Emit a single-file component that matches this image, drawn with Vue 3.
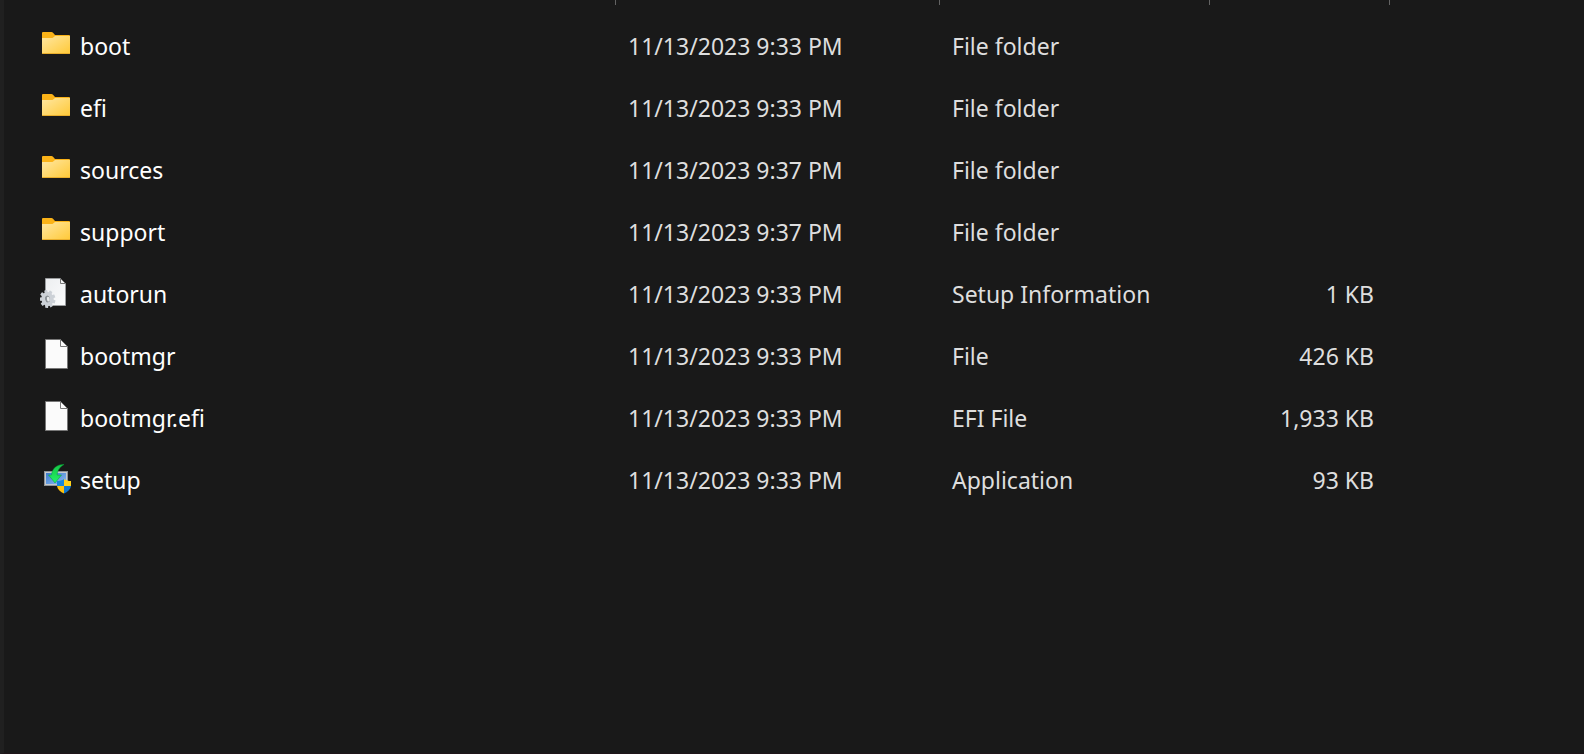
<script setup>
const columns = ['Name', 'Date modified', 'Type', 'Size']

const files = [
  { name: 'boot', icon: 'folder', date: '11/13/2023 9:33 PM', type: 'File folder', size: '' },
  { name: 'efi', icon: 'folder', date: '11/13/2023 9:33 PM', type: 'File folder', size: '' },
  { name: 'sources', icon: 'folder', date: '11/13/2023 9:37 PM', type: 'File folder', size: '' },
  { name: 'support', icon: 'folder', date: '11/13/2023 9:37 PM', type: 'File folder', size: '' },
  { name: 'autorun', icon: 'config', date: '11/13/2023 9:33 PM', type: 'Setup Information', size: '1 KB' },
  { name: 'bootmgr', icon: 'file', date: '11/13/2023 9:33 PM', type: 'File', size: '426 KB' },
  { name: 'bootmgr.efi', icon: 'file', date: '11/13/2023 9:33 PM', type: 'EFI File', size: '1,933 KB' },
  { name: 'setup', icon: 'setup', date: '11/13/2023 9:33 PM', type: 'Application', size: '93 KB' },
]

const teeth = [0, 40, 80, 120, 160, 200, 240, 280, 320]
</script>

<template>
  <main class="pane">
    <svg class="defs" width="0" height="0" aria-hidden="true">
      <defs>
        <linearGradient id="folder-front" x1="0" y1="0" x2="1" y2="1">
          <stop offset="0" stop-color="#ffe7a2" />
          <stop offset="1" stop-color="#ffc937" />
        </linearGradient>
        <linearGradient id="page-fill" x1="0" y1="0" x2="1" y2="1">
          <stop offset="0" stop-color="#eceef0" />
          <stop offset="1" stop-color="#fbfcfd" />
        </linearGradient>
        <linearGradient id="screen-fill" x1="0" y1="0" x2="1" y2="1">
          <stop offset="0" stop-color="#3a79cc" />
          <stop offset="1" stop-color="#8fbdf2" />
        </linearGradient>
        <linearGradient id="arrow-fill" x1="0" y1="0" x2="0" y2="1">
          <stop offset="0" stop-color="#14c544" />
          <stop offset="1" stop-color="#25f268" />
        </linearGradient>
      </defs>
    </svg>

    <table class="files">
      <colgroup>
        <col class="col-name" />
        <col class="col-date" />
        <col class="col-type" />
        <col class="col-size" />
        <col />
      </colgroup>
      <thead>
        <tr>
          <th v-for="column in columns" :key="column" scope="col" :aria-label="column">
            <span class="divider"></span>
          </th>
          <td></td>
        </tr>
      </thead>
      <tbody>
        <tr v-for="file in files" :key="file.name">
          <td class="name">
            <div class="entry">
              <svg class="icon" viewBox="0 0 32 32" width="32" height="32" aria-hidden="true">
                <g v-if="file.icon === 'folder'">
                  <path d="M2 5a1 1 0 0 1 1-1h8.500a2 2 0 0 1 1.500.7L15 7h14a1 1 0 0 1 1 1v10H2z" fill="#fbb318" />
                  <path d="M2 10h9.500a3 3 0 0 0 1.700-.6L15 8h15v17a1 1 0 0 1-1 1H3a1 1 0 0 1-1-1z" fill="url(#folder-front)" />
                  <path d="M2 25h28a1 1 0 0 1-1 1H3a1 1 0 0 1-1-1z" fill="#e9ae2c" />
                </g>

                <g v-else-if="file.icon === 'file'">
                  <path d="M5.500 1.500h15l7 7v22h-22z" fill="#fbfbfb" stroke="#777" />
                  <path d="M20.500 1.500v7h7" fill="none" stroke="#777" />
                </g>

                <g v-else-if="file.icon === 'config'">
                  <path d="M5.500 2.500h15l5 5v22h-20z" fill="url(#page-fill)" stroke="#9a9c9e" />
                  <path d="M20.500 2.500v5h5z" fill="#f4f5f6" stroke="#777" />
                  <g transform="translate(7.500 23) rotate(-12) scale(.88 1)">
                    <rect
                      v-for="angle in teeth"
                      :key="angle"
                      x="-1.700"
                      y="-9"
                      width="3.400"
                      height="5"
                      rx=".5"
                      fill="#ccd1d7"
                      :transform="`rotate(${angle})`"
                    />
                    <circle r="5.200" fill="#d3d8dd" stroke="#ccd1d7" stroke-width="3.600" />
                    <ellipse rx="2.800" ry="3.400" fill="#8b9196" />
                    <ellipse cx=".9" cy=".3" rx="1.600" ry="2.500" fill="#e9ecee" />
                  </g>
                </g>

                <g v-else>
                  <rect x="4" y="9" width="24" height="15" fill="#8d9296" />
                  <rect x="5" y="10" width="22" height="13" fill="#c6cacd" />
                  <rect x="6" y="11" width="20" height="11" fill="url(#screen-fill)" />
                  <path
                    d="M24 2.500c-7-.2-12 4-12.500 10.500H8.500l6.500 8 6.500-8h-4.300c.3-4.500 2.300-8 6.800-10.500z"
                    fill="url(#arrow-fill)"
                    stroke="#0b9c37"
                    stroke-width=".5"
                  />
                  <path d="M24 17c-2 1.500-4.500 2-7 2v5h7z" fill="#1687dc" />
                  <path d="M24 17c2 1.500 4.500 2 7 2v5h-7z" fill="#ffd21c" />
                  <path d="M17 24c.5 3.500 3.500 6 7 7.500V24z" fill="#ffc20e" />
                  <path d="M31 24c-.5 3.500-3.500 6-7 7.500V24z" fill="#0f78d0" />
                </g>
              </svg>
              <span>{{ file.name }}</span>
            </div>
          </td>
          <td>{{ file.date }}</td>
          <td>{{ file.type }}</td>
          <td class="size">{{ file.size }}</td>
          <td></td>
        </tr>
      </tbody>
    </table>
  </main>
</template>

<style>
body {
  background: #191919;
}
</style>

<style scoped>
.pane {
  box-sizing: border-box;
  min-height: 100vh;
  border-left: 4px solid #202020;
  border-bottom: 1px solid #1f1519;
  background: #191919;
  color: #dedede;
  font-family: "Segoe UI", "Noto Sans", "Open Sans", sans-serif;
  font-size: 23px;
  line-height: 32px;
}

.defs {
  position: absolute;
}

.files {
  width: 100%;
  table-layout: fixed;
  border-collapse: collapse;
}

.col-name {
  width: 612px;
}

.col-date {
  width: 324px;
}

.col-type {
  width: 270px;
}

.col-size {
  width: 180px;
}

thead th,
thead td {
  height: 15px;
  padding: 0;
  vertical-align: top;
}

.divider {
  display: block;
  height: 5px;
  border-right: 1px solid #636363;
}

tbody td {
  height: 62px;
  padding: 0 0 0 12px;
  white-space: nowrap;
  vertical-align: middle;
}

tbody .name {
  padding-left: 36px;
  color: #fff;
}

tbody .size {
  padding: 0 16px 0 0;
  text-align: right;
}

.entry {
  display: flex;
  align-items: center;
  gap: 8px;
}

.icon {
  flex: none;
  margin-bottom: 4px;
}
</style>
